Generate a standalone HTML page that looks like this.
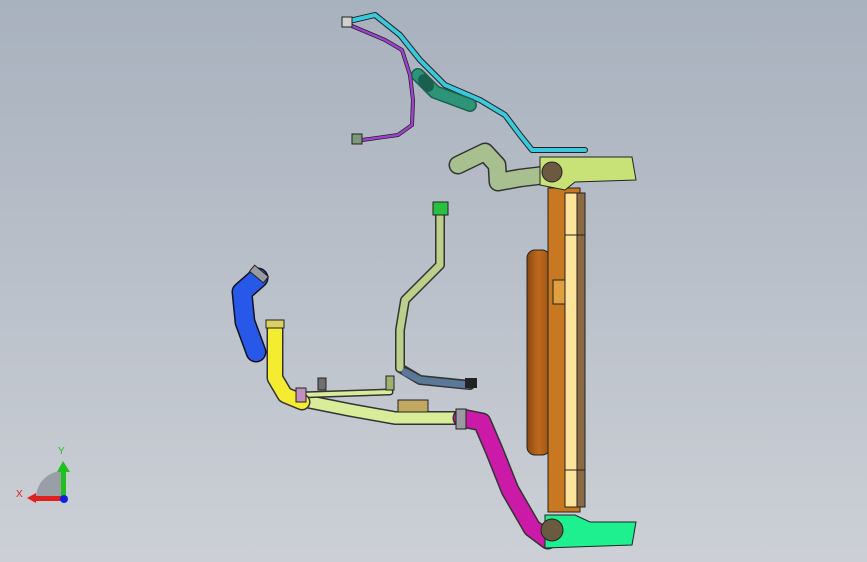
<!DOCTYPE html>
<html><head><meta charset="utf-8"><style>
html,body{margin:0;padding:0;width:867px;height:562px;overflow:hidden}
body{background:linear-gradient(180deg,#a8b1be 0%,#bcc2cb 55%,#ccd0d6 100%)}
svg{position:absolute;left:0;top:0}
</style></head><body>
<svg width="867" height="562" viewBox="0 0 867 562" xmlns="http://www.w3.org/2000/svg">
<defs>
<linearGradient id="fan" x1="0" x2="1"><stop offset="0" stop-color="#8a4a12"/><stop offset="0.5" stop-color="#c06a1c"/><stop offset="1" stop-color="#9a5516"/></linearGradient>
</defs>
<g fill="none" stroke-linecap="round" stroke-linejoin="round">
<!-- wires -->
<polyline points="345,22 375,15 400,35 420,60 445,85 480,100 505,115 520,135 532,150 585,150" stroke="#222" stroke-width="6"/>
<polyline points="345,22 375,15 400,35 420,60 445,85 480,100 505,115 520,135 532,150 585,150" stroke="#3cc8dc" stroke-width="4"/>
<polyline points="352,26 385,40 402,50 410,75 413,100 412,125 398,135 362,140" stroke="#222" stroke-width="4"/>
<polyline points="352,26 385,40 402,50 410,75 413,100 412,125 398,135 362,140" stroke="#a040d0" stroke-width="2.5"/>
<polyline points="418,75 435,92 470,105" stroke="#1a6050" stroke-width="14"/>
<polyline points="418,75 435,92 470,105" stroke="#2e9478" stroke-width="11"/>
<polyline points="424,80 428,86 M440,94 446,97" stroke="#1a6050" stroke-width="12"/>
<!-- top green hose -->
<polyline points="458,165 485,152 497,165 498,182 520,178 545,175" stroke="#333" stroke-width="19"/>
<polyline points="458,165 485,152 497,165 498,182 520,178 545,175" stroke="#a8bf90" stroke-width="16"/>
<!-- olive pipe -->
<polyline points="440,210 440,265 405,300 400,330 400,368 420,380 470,385" stroke="#333" stroke-width="10"/>
<polyline points="440,210 440,265 405,300 400,330 400,368" stroke="#bcd08c" stroke-width="7"/>
<polyline points="405,372 420,380 468,385" stroke="#5a7898" stroke-width="7"/>
<!-- long light green pipe -->
<polyline points="300,400 350,410 395,418 470,418" stroke="#333" stroke-width="14"/>
<polyline points="300,400 350,410 395,418 470,418" stroke="#d8ec9a" stroke-width="11"/>
<polyline points="300,395 390,392" stroke="#333" stroke-width="7"/>
<polyline points="300,395 390,392" stroke="#d8ec9a" stroke-width="4"/>
<!-- magenta -->
<polyline points="462,418 482,422 494,450 510,490 532,528 548,540" stroke="#333" stroke-width="19"/>
<polyline points="462,418 482,422 494,450 510,490 532,528 548,540" stroke="#cc1aa8" stroke-width="16"/>
<!-- yellow -->
<polyline points="275,330 275,378 285,395 302,402" stroke="#333" stroke-width="17"/>
<polyline points="275,330 275,378 285,395 302,402" stroke="#f4ec30" stroke-width="14"/>
<!-- blue -->
<polyline points="258,278 242,292 245,322 256,352" stroke="#112" stroke-width="21"/>
<polyline points="258,278 242,292 245,322 256,352" stroke="#2858e8" stroke-width="18"/>
</g>
<!-- clamps -->
<rect x="456" y="409" width="10" height="20" fill="#9a9aa0" stroke="#222"/>
<rect x="250" y="270" width="18" height="8" fill="#9a9aa0" stroke="#222" transform="rotate(40 259 274)"/>
<rect x="266" y="320" width="18" height="8" fill="#d8d060" stroke="#222"/>
<rect x="296" y="388" width="10" height="14" fill="#c090c0" stroke="#222"/>
<rect x="398" y="400" width="30" height="12" fill="#c0a860" stroke="#222"/>
<rect x="318" y="378" width="8" height="12" fill="#707070" stroke="#222"/>
<rect x="386" y="376" width="8" height="14" fill="#a0b070" stroke="#222"/>
<rect x="465" y="378" width="12" height="10" fill="#222"/>
<rect x="352" y="134" width="10" height="10" fill="#7a9a7a" stroke="#222"/>
<rect x="342" y="17" width="10" height="10" fill="#d0d0d0" stroke="#222"/>
<!-- top green cap -->
<rect x="433" y="202" width="15" height="13" fill="#28c040" stroke="#222"/>
<!-- radiator -->
<rect x="527" y="250" width="23" height="205" rx="8" fill="url(#fan)" stroke="#222"/>
<rect x="548" y="188" width="32" height="324" fill="#c87820" stroke="#222"/>
<rect x="553" y="280" width="12" height="24" fill="#e0a040" stroke="#222"/>
<rect x="565" y="193" width="12" height="314" fill="#fde49a" stroke="#222"/>
<rect x="577" y="193" width="8" height="314" fill="#8c6a44" stroke="#222"/>
<line x1="565" y1="235" x2="585" y2="235" stroke="#222"/>
<line x1="565" y1="470" x2="585" y2="470" stroke="#222"/>
<polygon points="540,157 632,157 636,180 575,182 565,190 540,185" fill="#c8e278" stroke="#222"/>
<circle cx="552" cy="172" r="10" fill="#6a5a40" stroke="#222"/>
<polygon points="545,515 575,515 590,522 636,522 632,545 545,548" fill="#1ef090" stroke="#222"/>
<circle cx="552" cy="530" r="11" fill="#6a5a40" stroke="#222"/>
<!-- axis -->
<path d="M63,498 L36,498 A27,27 0 0 1 63,471 Z" fill="#9a9ea6"/>
<rect x="61" y="470" width="5" height="28" fill="#20c020"/>
<polygon points="57,472 63,461 70,472" fill="#20c020"/>
<rect x="34" y="496" width="29" height="5" fill="#e02020"/>
<polygon points="36,493 27,498 36,503" fill="#e02020"/>
<circle cx="64" cy="499" r="4" fill="#1020e0"/>
<text x="58" y="454" font-family="Liberation Sans, sans-serif" font-size="10" fill="#20c020">Y</text>
<text x="16" y="497" font-family="Liberation Sans, sans-serif" font-size="10" fill="#e02020">X</text>
</svg>
</body></html>
